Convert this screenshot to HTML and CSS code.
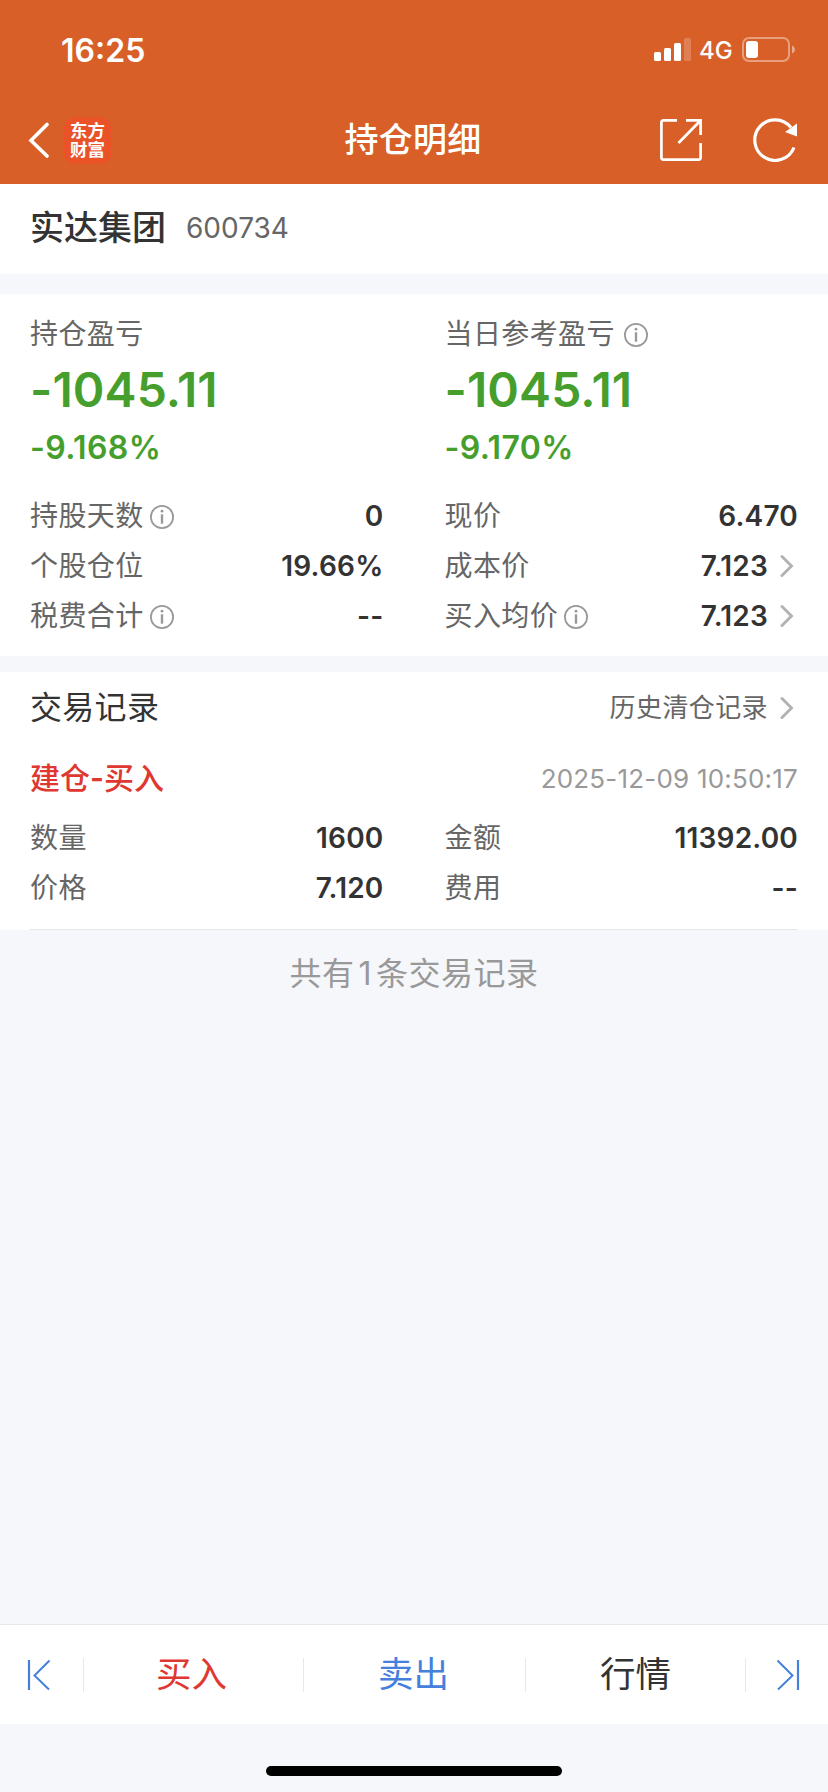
FILE: index.html
```html
<!DOCTYPE html>
<html lang="zh-CN">
<head>
    <meta charset="UTF-8">
    <meta name="viewport" content="width=device-width, initial-scale=1.0">
    <title>持仓明细</title>
    <link rel="stylesheet" href="styles.css">
</head>
<body>
    <!-- Shared icons -->
    <svg class="sprite" width="0" height="0">
        <symbol id="info" viewBox="0 0 24 24">
            <circle cx="12" cy="12" r="11.1" fill="none" stroke="#999" stroke-width="1.8"/>
            <circle cx="12" cy="6.200" r="1.4" fill="#999"/>
            <path d="M12 9.300v9.400" stroke="#999" stroke-width="2.400"/>
        </symbol>
        <symbol id="arrow" viewBox="0 0 14 24">
            <path d="M2 2.500l9.500 9.500L2 21.500" fill="none" stroke="#b2b2b2" stroke-width="2.900" stroke-linecap="round"/>
        </symbol>
    </svg>

    <header class="header">
        <div class="status-bar">
            <span class="time">16:25</span>
            <div class="status-icons">
                <svg width="38" height="24" viewBox="0 0 38 24" fill="#fff">
                    <rect x="0" y="14" width="7" height="9" rx="1.5"/>
                    <rect x="10" y="10" width="7" height="13" rx="1.5"/>
                    <rect x="20" y="5" width="7" height="18" rx="1.5"/>
                    <rect x="30" y="0" width="7" height="23" rx="1.5" opacity="0.2"/>
                </svg>
                <span class="network">4G</span>
                <svg width="54" height="26" viewBox="0 0 54 26">
                    <rect x="1" y="1" width="46" height="23" rx="6" fill="none" stroke="#fff" stroke-opacity="0.4" stroke-width="2"/>
                    <rect x="4" y="4" width="12" height="17" rx="3" fill="#fff"/>
                    <path d="M50 8.500c4 1.500 4 6.500 0 8z" fill="#fff" opacity="0.45"/>
                </svg>
            </div>
        </div>
        <nav class="nav">
            <div class="nav-left">
                <svg width="21" height="36" viewBox="0 0 21 36">
                    <path d="M19 2.500L3 18.500 19 34" fill="none" stroke="#fff" stroke-width="3.600" stroke-linecap="round"/>
                </svg>
                <div class="logo"><span>东方</span><span>财富</span></div>
            </div>
            <h1>持仓明细</h1>
            <div class="nav-right">
                <svg width="42" height="42" viewBox="0 0 42 42" fill="none" stroke="#fff" stroke-width="2.700">
                    <path d="M17 1.400H3.400a2 2 0 0 0-2 2v35.200a2 2 0 0 0 2 2h35.200a2 2 0 0 0 2-2V24"/>
                    <path d="M26 1.400h14.600V16M40 2L18.500 24"/>
                </svg>
                <svg width="45" height="44" viewBox="0 0 45 44">
                    <path d="M41 29.500A20.300 20.300 0 1 1 38 9.500" fill="none" stroke="#fff" stroke-width="3.200"/>
                    <path d="M44 5.500v13L32 14z" fill="#fff"/>
                </svg>
            </div>
        </nav>
    </header>

    <section class="stock">
        <h2>实达集团</h2>
        <span class="code">600734</span>
    </section>

    <section class="summary">
        <div class="columns">
            <div class="profit">
                <div class="label">持仓盈亏</div>
                <div class="amount">-1045.11</div>
                <div class="percent">-9.168%</div>
            </div>
            <div class="profit">
                <div class="label">当日参考盈亏<svg class="info wide"><use href="#info"/></svg></div>
                <div class="amount">-1045.11</div>
                <div class="percent">-9.170%</div>
            </div>
        </div>
        <div class="columns">
            <div class="row"><span class="label">持股天数<svg class="info"><use href="#info"/></svg></span><b>0</b></div>
            <div class="row"><span class="label">现价</span><b>6.470</b></div>
            <div class="row"><span class="label">个股仓位</span><b>19.66%</b></div>
            <div class="row"><span class="label">成本价</span><b>7.123<svg class="arrow"><use href="#arrow"/></svg></b></div>
            <div class="row"><span class="label">税费合计<svg class="info"><use href="#info"/></svg></span><b>--</b></div>
            <div class="row"><span class="label">买入均价<svg class="info"><use href="#info"/></svg></span><b>7.123<svg class="arrow"><use href="#arrow"/></svg></b></div>
        </div>
    </section>

    <section class="records">
        <div class="records-head">
            <h3>交易记录</h3>
            <a class="history">历史清仓记录<svg class="arrow"><use href="#arrow"/></svg></a>
        </div>
        <div class="record">
            <div class="record-head">
                <span class="type">建仓<b>-</b>买入</span>
                <span class="date">2025-12-09 10:50:17</span>
            </div>
            <div class="columns">
                <div class="row"><span class="label">数量</span><b>1600</b></div>
                <div class="row"><span class="label">金额</span><b>11392.00</b></div>
                <div class="row"><span class="label">价格</span><b>7.120</b></div>
                <div class="row"><span class="label">费用</span><b>--</b></div>
            </div>
        </div>
    </section>
    <p class="total">共有<span>1</span>条交易记录</p>

    <footer class="footer">
        <div class="tabs">
            <div class="tab side">
                <svg width="24" height="32" viewBox="0 0 24 32" fill="none" stroke="#4680dd">
                    <path d="M2 1v30" stroke-width="2.200"/>
                    <path d="M22.500 1.500L7.500 16.500 22 30.500" stroke-width="2"/>
                </svg>
            </div>
            <div class="tab buy">买入</div>
            <div class="tab sell">卖出</div>
            <div class="tab">行情</div>
            <div class="tab side">
                <svg width="24" height="32" viewBox="0 0 24 32" fill="none" stroke="#4680dd">
                    <path d="M22 1v30" stroke-width="2.200"/>
                    <path d="M1.500 1.500L16.500 16.500 2 30.500" stroke-width="2"/>
                </svg>
            </div>
        </div>
        <div class="home-bar"></div>
    </footer>
</body>
</html>
```

FILE: styles.css
```css
/* Reset and global styles */
* {
    margin: 0;
    padding: 0;
    box-sizing: border-box;
}

body {
    font-family: Inter, "Noto Sans CJK SC", sans-serif;
    background: #f6f7fa;
    color: #333;
    min-height: 100vh;
    display: flex;
    flex-direction: column;
}

svg {
    display: block;
    flex-shrink: 0;
}

.sprite {
    position: absolute;
}

/* Header */
.header {
    height: 184px;
    background: #d86028;
    color: #fff;
}

.status-bar {
    height: 96px;
    padding: 4px 32px 0 61px;
    display: flex;
    justify-content: space-between;
    align-items: center;
}

.time {
    font-size: 32px;
    font-weight: 600;
}

.status-icons {
    display: flex;
    align-items: center;
}

.network {
    font-size: 24px;
    font-weight: 500;
    width: 42px;
    margin-left: 7px;
    margin-right: 1px;
    padding-top: 1px;
}

.nav {
    height: 88px;
    padding: 0 30px 0 28px;
    display: grid;
    grid-template-columns: 1fr auto 1fr;
    align-items: center;
}

.nav h1 {
    font-size: 34px;
    font-weight: 500;
    line-height: 88px;
    letter-spacing: 0.3px;
}

.nav-left,
.nav-right {
    display: flex;
    align-items: center;
}

.nav-left {
    gap: 15px;
}

.nav-right {
    justify-content: flex-end;
    gap: 51px;
}

.logo {
    width: 47px;
    height: 47px;
    border-radius: 10px;
    background: #ea5228;
    font-size: 17.5px;
    font-weight: 700;
    line-height: 19px;
    display: flex;
    flex-direction: column;
    align-items: center;
    justify-content: center;
}

/* Stock name */
.stock {
    height: 90px;
    padding: 0 30px 2px;
    margin-bottom: 20px;
    background: #fff;
    display: flex;
    align-items: center;
    gap: 20px;
}

.stock h2 {
    font-size: 34px;
    font-weight: 500;
    line-height: 50px;
}

.code {
    font-size: 28px;
    color: #666;
}

/* Profit summary */
.summary {
    padding: 15px 30px;
    margin-bottom: 16px;
    background: #fff;
}

.columns {
    display: grid;
    grid-template-columns: 1fr 1fr;
    column-gap: 61px;
}

.label {
    font-size: 28px;
    line-height: 50px;
    letter-spacing: 0.4px;
    color: #666;
    display: flex;
    align-items: center;
}

.info {
    width: 24px;
    height: 24px;
    margin: 1px 0 0 6px;
}

.info.wide {
    margin-left: 9px;
}

.profit {
    height: 182px;
    color: #469e2c;
    font-weight: 600;
}

.profit .label {
    font-weight: 400;
}

.amount {
    font-size: 48px;
    line-height: 62px;
    letter-spacing: 0.1px;
}

.percent {
    font-size: 32px;
    line-height: 53px;
    letter-spacing: 0.4px;
}

.row {
    height: 50px;
    display: flex;
    justify-content: space-between;
    align-items: center;
}

.row b {
    font-size: 28px;
    font-weight: 600;
    letter-spacing: 0.2px;
    display: flex;
    align-items: center;
}

.arrow {
    width: 14px;
    height: 24px;
    margin: 0 4px 0 12px;
}

/* Trade records */
.records {
    background: #fff;
    padding: 0 30px;
}

.records-head {
    height: 72px;
    display: flex;
    justify-content: space-between;
    align-items: center;
}

.records-head h3 {
    font-size: 32px;
    font-weight: 400;
    line-height: 48px;
    letter-spacing: 0.3px;
}

.history {
    font-size: 26px;
    line-height: 40px;
    letter-spacing: 0.4px;
    color: #666;
    display: flex;
    align-items: center;
}

.record {
    height: 186px;
    border-bottom: 1px solid #e6e6e6;
}

.record-head {
    height: 69px;
    display: flex;
    justify-content: space-between;
    align-items: center;
}

.type {
    font-size: 30px;
    font-weight: 500;
    line-height: 46px;
    padding-bottom: 2px;
    color: #df3831;
}

.type b {
    font-weight: 600;
}

.date {
    font-size: 26px;
    letter-spacing: 0.2px;
    padding-bottom: 1px;
    color: #999;
}

.total {
    font-size: 32px;
    line-height: 88px;
    letter-spacing: 0.5px;
    text-align: center;
    color: #999;
}

.total span {
    margin: 0 4px;
}

/* Bottom bar */
.footer {
    height: 168px;
    margin-top: auto;
}

.tabs {
    height: 100px;
    border-top: 1px solid #e6e8eb;
    background: #fff;
    display: grid;
    grid-template-columns: 83px 220px 222px 220px 83px;
    align-items: center;
}

.tab {
    height: 34px;
    line-height: 34px;
    font-size: 35.5px;
    display: flex;
    justify-content: center;
    align-items: center;
}

.tab + .tab {
    border-left: 1px solid #e8e8e8;
}

.tab.side:first-child {
    padding-right: 6px;
}

.tab.side:last-child {
    padding-left: 2px;
}

.buy {
    color: #df3831;
    padding-right: 4px;
}

.sell {
    color: #4680dd;
    padding-right: 2px;
}

.home-bar {
    width: 296px;
    height: 10px;
    margin: 42px auto 0;
    border-radius: 5px;
    background: #000;
}
```
